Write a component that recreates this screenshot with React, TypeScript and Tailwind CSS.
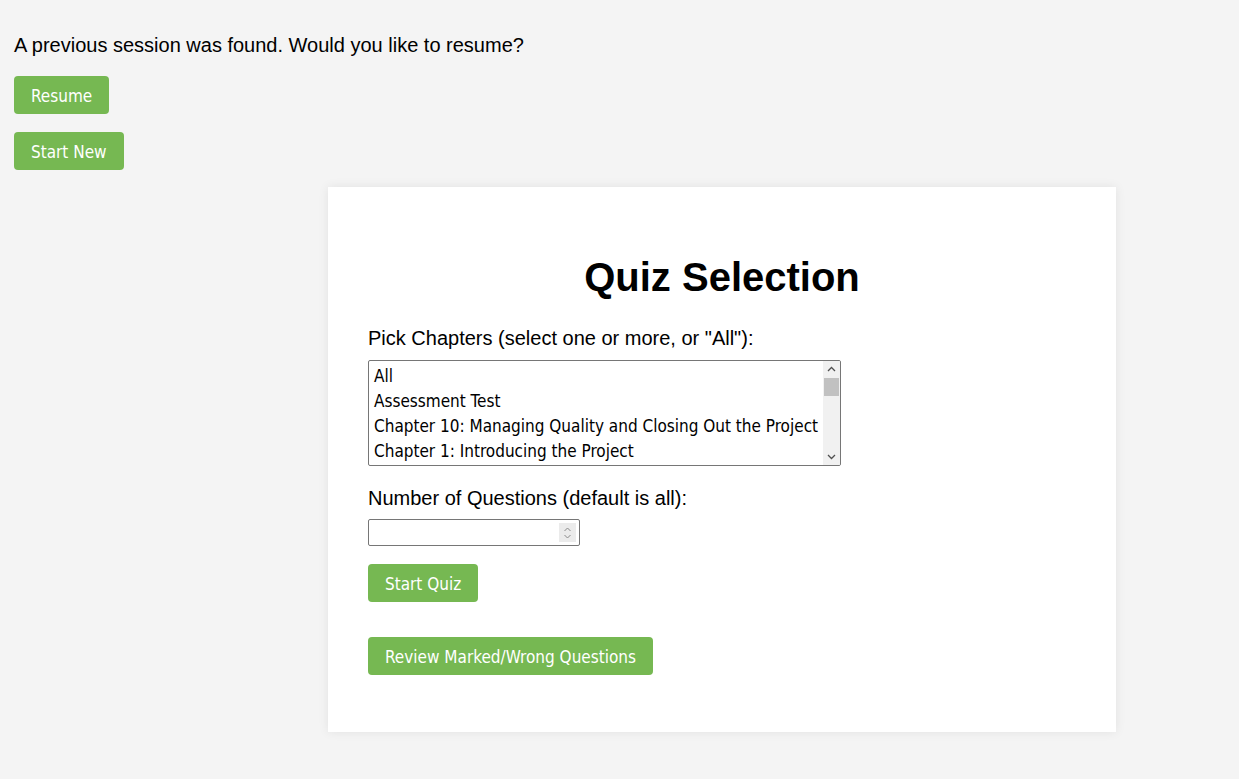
import { useState } from "react";

const chapters = [
  "All",
  "Assessment Test",
  "Chapter 10: Managing Quality and Closing Out the Project",
  "Chapter 1: Introducing the Project",
  "Chapter 2: Initiating the Project",
];

function GreenButton({ label }: { label: string }) {
  return (
    <button className="h-[38px] px-[17px] pt-[2px] rounded-[4px] bg-[#76b852] text-white text-[17px] font-['DejaVu_Sans_Condensed','DejaVu_Sans',sans-serif] leading-none self-start">
      {label}
    </button>
  );
}

export default function App() {
  const [selected, setSelected] = useState<string[]>([]);

  const toggle = (c: string) =>
    setSelected((s) => (s.includes(c) ? s.filter((x) => x !== c) : [...s, c]));

  return (
    <div className="min-h-screen bg-[#f4f4f4] px-[14px] pt-[34px] pb-[40px] font-['Liberation_Sans',Arial,sans-serif] text-black">
      <p className="text-[20px] leading-[23px]">
        A previous session was found. Would you like to resume?
      </p>
      <div className="flex flex-col gap-[18px] mt-[19px]">
        <GreenButton label="Resume" />
        <GreenButton label="Start New" />
      </div>

      <div className="ml-[314px] mt-[17px] w-[788px] bg-white shadow-[0_0_10px_rgba(0,0,0,0.08)] px-[40px] pt-[24px] pb-[57px] flex flex-col">
        <h1 className="text-center text-[40px] leading-[46px] font-bold mt-[43px]">
          Quiz Selection
        </h1>

        <label className="text-[20px] leading-[23px] mt-[27px]">
          Pick Chapters (select one or more, or "All"):
        </label>
        <div className="mt-[10px] w-[473px] h-[106px] border border-[#767676] rounded-[2px] flex overflow-hidden">
          <div className="flex-1 pt-[3px] font-['DejaVu_Sans_Condensed','DejaVu_Sans',sans-serif] text-[17px]">
            {chapters.slice(0, 4).map((c) => (
              <div
                key={c}
                onClick={() => toggle(c)}
                className={`h-[25px] leading-[25px] px-[5px] whitespace-nowrap cursor-default ${
                  selected.includes(c) ? "bg-[#cecece]" : ""
                }`}
              >
                {c}
              </div>
            ))}
          </div>
          <div className="w-[17px] bg-[#f1f1f1] flex flex-col items-center">
            <svg width="17" height="17" viewBox="0 0 17 17" className="shrink-0">
              <path d="M5 10 L8.5 6.5 L12 10" fill="none" stroke="#505050" strokeWidth="1.3" />
            </svg>
            <div className="w-[15px] h-[18px] bg-[#c1c1c1]" />
            <div className="flex-1" />
            <svg width="17" height="17" viewBox="0 0 17 17" className="shrink-0">
              <path d="M5 7 L8.5 10.5 L12 7" fill="none" stroke="#505050" strokeWidth="1.3" />
            </svg>
          </div>
        </div>

        <label className="text-[20px] leading-[23px] mt-[21px]">
          Number of Questions (default is all):
        </label>
        <div className="relative mt-[9px] w-[212px] h-[27px]">
          <input
            type="number"
            min={1}
            className="w-full h-full border border-[#767676] rounded-[2px] px-[4px] text-[16px] outline-none [appearance:textfield] [&::-webkit-inner-spin-button]:appearance-none [&::-webkit-outer-spin-button]:appearance-none"
          />
          <div className="absolute right-[4px] top-[4px] w-[17px] h-[19px] bg-[#ebebeb] flex items-center justify-center">
            <svg width="9" height="14" viewBox="0 0 9 14">
              <path d="M1.5 5 L4.5 2 L7.5 5" fill="none" stroke="#8a8a8a" strokeWidth="1" />
              <path d="M1.5 9 L4.5 12 L7.5 9" fill="none" stroke="#8a8a8a" strokeWidth="1" />
            </svg>
          </div>
        </div>

        <div className="mt-[18px] flex">
          <GreenButton label="Start Quiz" />
        </div>
        <div className="mt-[35px] flex">
          <GreenButton label="Review Marked/Wrong Questions" />
        </div>
      </div>
    </div>
  );
}
